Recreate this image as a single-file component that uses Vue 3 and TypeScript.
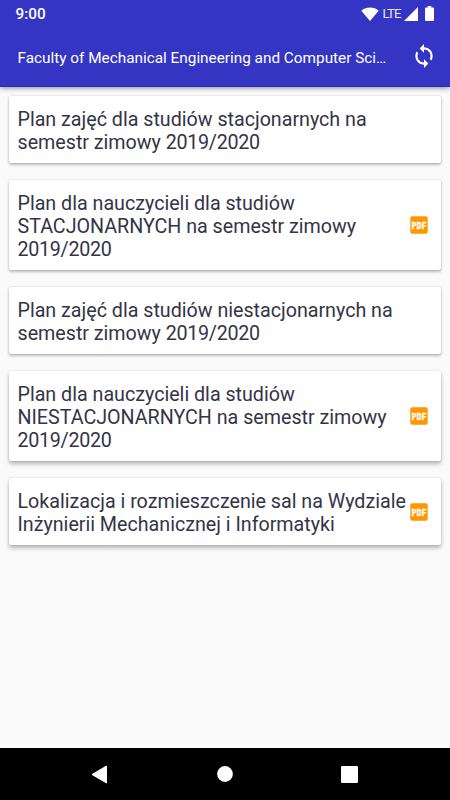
<script setup lang="ts">
interface Plan {
  lines: string[]
  pdf: boolean
}

interface Part {
  text: string
  numeric: boolean
}

const title: string = 'Faculty of Mechanical Engineering and Computer Sci…'

const plans: Plan[] = [
  { lines: ['Plan zajęć dla studiów stacjonarnych na', 'semestr zimowy 2019/2020'], pdf: false },
  { lines: ['Plan dla nauczycieli dla studiów', 'STACJONARNYCH na semestr zimowy', '2019/2020'], pdf: true },
  { lines: ['Plan zajęć dla studiów niestacjonarnych na', 'semestr zimowy 2019/2020'], pdf: false },
  { lines: ['Plan dla nauczycieli dla studiów', 'NIESTACJONARNYCH na semestr zimowy', '2019/2020'], pdf: true },
  { lines: ['Lokalizacja i rozmieszczenie sal na Wydziale', 'Inżynierii Mechanicznej i Informatyki'], pdf: true },
]

// Splits a line so that the academic year can be set slightly tighter.
function parts(line: string): Part[] {
  return line
    .split(/(\d+\/\d+)/)
    .filter((text) => text.length > 0)
    .map((text) => ({ text, numeric: /^\d/.test(text) }))
}
</script>

<template>
  <div class="screen">
    <header class="top">
      <div class="status">
        <span class="clock">9:00</span>
        <svg class="wifi" width="18" height="14" viewBox="0 0 18 14">
          <path d="M0.3 3.7C5 -0.5 13 -0.5 17.7 3.7L9 14Z" fill="#fff" />
        </svg>
        <span class="lte">LTE</span>
        <svg class="signal" width="14" height="14" viewBox="0 0 14 14">
          <path d="M14 0V14H0Z" fill="#fff" />
        </svg>
        <svg class="battery" width="9" height="15" viewBox="0 0 9 15">
          <path d="M2.7 0h3.6v1.5H8q1 0 1 1V14q0 1-1 1H1q-1 0-1-1V2.5q0-1 1-1h1.7z" fill="#fff" />
        </svg>
      </div>
      <div class="toolbar">
        <h1 class="title">{{ title }}</h1>
        <button class="sync" aria-label="Sync">
          <svg width="26" height="26" viewBox="0 0 24 24">
            <path
              fill="#fff"
              d="M12 4V1L8 5l4 4V6c3.310 0 6 2.690 6 6 0 1.010-.25 1.970-.7 2.800l1.460 1.460C19.540 15.030 20 13.570 20 12c0-4.420-3.580-8-8-8zm0 14c-3.310 0-6-2.690-6-6 0-1.010.25-1.970.7-2.800L5.240 7.740C4.460 8.970 4 10.430 4 12c0 4.420 3.580 8 8 8v3l4-4-4-4v3z"
            />
          </svg>
        </button>
      </div>
    </header>

    <main class="list">
      <article v-for="(plan, i) in plans" :key="i" class="card">
        <p class="name">
          <span v-for="line in plan.lines" :key="line" class="line"
            ><span v-for="part in parts(line)" :key="part.text" :class="{ year: part.numeric }">{{ part.text }}</span></span
          >
        </p>
        <svg v-if="plan.pdf" class="pdf" width="18" height="18" viewBox="0 0 18 18">
          <rect x="0.3" y="0.3" width="17.4" height="17.4" rx="1.8" fill="#ff9800" />
          <text class="pdf-text" x="1.5" y="12.5" textLength="15" lengthAdjust="spacingAndGlyphs">PDF</text>
        </svg>
      </article>
    </main>

    <nav class="nav">
      <svg width="17" height="19" viewBox="0 0 17 19">
        <path d="M15.5 1L1 9.5L15.5 18Z" fill="#fff" stroke="#fff" stroke-linejoin="round" />
      </svg>
      <svg class="home" width="16" height="16" viewBox="0 0 16 16"><circle cx="8" cy="8" r="7.9" fill="#fff" /></svg>
      <svg width="17" height="17" viewBox="0 0 17 17"><rect width="17" height="17" rx="1.2" fill="#fff" /></svg>
    </nav>
  </div>
</template>

<style>
body {
  margin: 0;
}
</style>

<style scoped>
.screen {
  box-sizing: border-box;
  width: 450px;
  height: 800px;
  display: flex;
  flex-direction: column;
  overflow: hidden;
  background: #fafafa;
  font-family: Roboto, "Noto Sans", sans-serif;
}
.top {
  flex: none;
  height: 87px;
  background: #3535c3;
  color: #fff;
  box-shadow: 0 1px 5px rgba(0, 0, 0, 0.45);
  border-bottom: 1px solid #2929bd;
  box-sizing: border-box;
}
.status {
  display: flex;
  height: 27px;
  align-items: center;
  padding: 0 16px 0 15.5px;
}
.clock {
  flex: 1;
  font-size: 15.3px;
  font-weight: 500;
}
.lte {
  margin: 0 2px 0 4px;
  width: 19.5px;
  font-size: 13.3px;
  line-height: 15px;
  letter-spacing: -0.95px;
  color: #e4e4f8;
}
.battery {
  margin-left: 7px;
}
.toolbar {
  display: flex;
  align-items: center;
  justify-content: space-between;
  height: 58px;
  padding: 0 13.5px 0 17.5px;
}
.title {
  margin: 0;
  padding-top: 3px;
  font-size: 15.33px;
  font-weight: 400;
  line-height: 18px;
  white-space: nowrap;
}
.sync {
  display: flex;
  padding: 0;
  border: 0;
  background: none;
}
.list {
  flex: 1;
  display: flex;
  flex-direction: column;
  gap: 16.7px;
  padding: 9px 9px 0;
}
.card {
  display: flex;
  align-items: center;
  justify-content: space-between;
  padding: 12px 13px 9.3px 8.5px;
  border-radius: 2px;
  background: #fff;
  box-shadow: 0 2px 3px rgba(0, 0, 0, 0.24), 0 0 2px rgba(0, 0, 0, 0.2);
}
.card:nth-child(n + 4) {
  box-shadow: 0 3px 4px rgba(0, 0, 0, 0.27), 0 0 2px rgba(0, 0, 0, 0.15);
}
.name {
  margin: 0;
  color: #343446;
  font-size: 19.69px;
  font-weight: 400;
  line-height: 23px;
  letter-spacing: -0.015px;
}
.line {
  display: block;
  white-space: pre;
}
.year {
  letter-spacing: -0.3px;
}
.pdf {
  flex: none;
  margin-top: -2px;
}
.pdf-text {
  fill: #fff;
  stroke: #fff;
  stroke-width: 0.3px;
  font-family: "DejaVu Sans Mono", monospace;
  font-size: 9px;
  font-weight: 700;
}
.nav {
  flex: none;
  display: flex;
  align-items: center;
  justify-content: space-between;
  height: 52px;
  padding: 0 92.5px 0 91px;
  box-sizing: border-box;
  background: #000;
}
.home {
  margin-left: 2px;
}
</style>
